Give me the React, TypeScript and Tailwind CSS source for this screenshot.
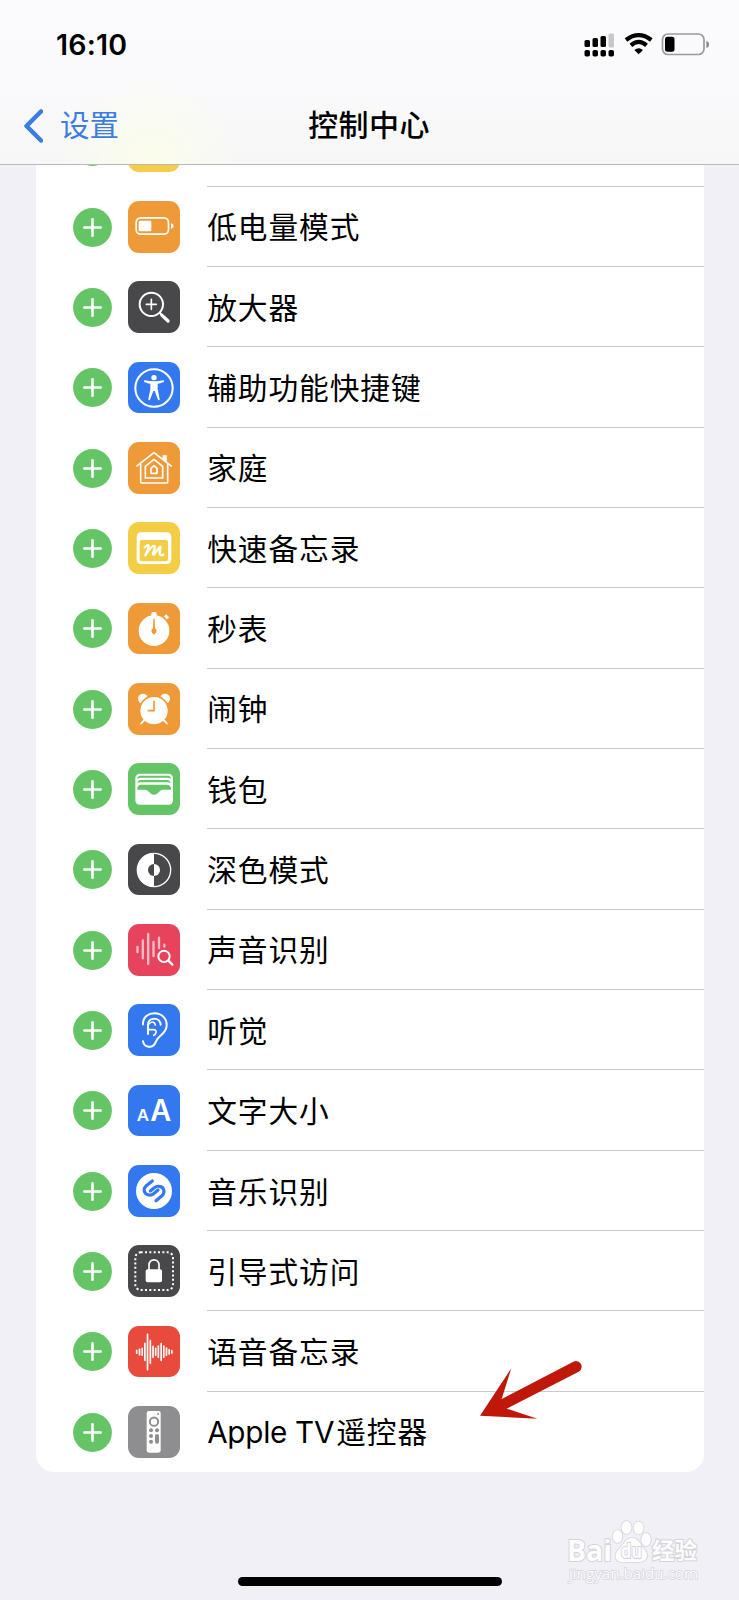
import { ReactNode } from "react";

type Control = {
    name: ReactNode,
    color: string,
    icon?: ReactNode
}

const controls: Control[] = [
    { name: "", color: "bg-[#f5cd46]" },
    {
        name: "低电量模式", color: "bg-[#ef9a38]", icon: <>
            <rect x="24.5" y="50.5" width="97" height="49" rx="14" fill="none" stroke="white" strokeWidth="5" />
            <rect x="32" y="59" width="38" height="32" rx="4" />
            <path d="M129 67q8 2 8 8t-8 8z" />
        </>
    },
    {
        name: "放大器", color: "bg-[#48484a]", icon: <g fill="none" stroke="white" strokeWidth="6" strokeLinecap="round">
            <circle cx="70" cy="70" r="35" />
            <path d="M55 70H85M70 55V85" strokeWidth="5" />
            <path d="M95 95L104 104" />
            <path d="M102 103L120 120" strokeWidth="10" />
        </g>
    },
    {
        name: "辅助功能快捷键", color: "bg-[#3478f0]", icon: <>
            <circle cx="78" cy="78" r="56" fill="none" stroke="white" strokeWidth="6" />
            <circle cx="78" cy="47" r="8" />
            <path d="M51 55Q78 61 105 55Q109 55 108 59Q107 61 89 65V82L95 111Q94 117 90 113L80 87H76L66 113Q62 117 61 111L67 82V65Q49 61 48 59Q47 55 51 55Z" />
        </>
    },
    {
        name: "家庭", color: "bg-[#ef9a38]", icon: <g fill="none" stroke="white" strokeWidth="5" strokeLinejoin="round">
            <path d="M104 52V40H116V62" fill="white" strokeWidth="1" />
            <path d="M25 73L78 32L131 73" />
            <path d="M38 66V119Q38 123 42 123H115Q119 123 119 119V66" />
            <path d="M52 73L78 52L104 73V108H52Z" />
            <path d="M69 79L78 71L87 79V94H69Z" />
        </g>
    },
    {
        name: "快速备忘录", color: "bg-[#f3cd46]", icon: <>
            <path fillRule="evenodd" d="M39 31H116Q130 31 130 45V112Q130 126 116 126H39Q26 126 26 112V45Q26 31 39 31ZM41 54Q35 54 35 60V111Q35 118 42 118H113Q120 118 120 111V60Q120 54 114 54Z" />
            <path d="M50 76Q61 66 62 72Q62 78 52 100Q72 69 79 72Q83 75 75 93Q73 101 79 96L94 76Q100 71 97 81Q90 105 106 98" fill="none" stroke="white" strokeWidth="7" strokeLinecap="round" strokeLinejoin="round" />
        </>
    },
    {
        name: "秒表", color: "bg-[#ef9a38]", icon: <>
            <circle cx="78" cy="83" r="46" />
            <rect x="70" y="27" width="16" height="14" rx="5" />
            <path d="M111 37L120 46" stroke="white" strokeWidth="9" />
            <path d="M76 48Q78 44 80 48L81 76Q86 79 86 84Q86 89 80 93L78 96L76 93Q70 89 70 84Q70 79 75 76Z" fill="#ef9a38" />
        </>
    },
    {
        name: "闹钟", color: "bg-[#ef9a38]", icon: <>
            <circle cx="45" cy="47" r="15" />
            <circle cx="111" cy="47" r="15" />
            <circle cx="78" cy="83" r="46" fill="#ef9a38" />
            <path d="M50 110L39 122M106 110L117 122" stroke="white" strokeWidth="5" strokeLinecap="round" />
            <circle cx="78" cy="83" r="41" />
            <path d="M78 53V83H59" fill="none" stroke="#ef9a38" strokeWidth="5" />
        </>
    },
    {
        name: "钱包", color: "bg-[#64c466]", icon: <>
            <rect x="22" y="32" width="113" height="93" rx="13" />
            <path d="M28 47Q28 38 38 38H118Q129 38 129 47Q125 44 118 44H39Q32 44 28 47ZM28 60Q31 51 39 51H118Q125 51 129 60V61Q125 58 118 58H39Q32 58 28 61ZM28 74Q31 65 39 65H118Q125 65 129 74V80H106Q100 80 96 84L86 93Q78 98 70 93L60 84Q56 80 50 80H28Z" fill="#64c466" />
        </>
    },
    {
        name: "深色模式", color: "bg-[#48484a]", icon: <>
            <circle cx="78" cy="78" r="50" fill="none" stroke="white" strokeWidth="4" />
            <path d="M78 27A51 51 0 0 0 78 129Z" />
            <path d="M78 60A18 18 0 0 0 78 96Z" fill="#48484a" />
            <path d="M78 60A18 18 0 0 1 78 96Z" />
        </>
    },
    {
        name: "声音识别", color: "bg-[#e7435d]", icon: <g fill="none" stroke="white" strokeLinecap="round">
            <path d="M28.500 69V84M44.500 49V103M60.500 30V120M76.500 54V96M93 41V72M109 62V68" strokeWidth="7" opacity=".65" />
            <circle cx="108" cy="97" r="17" strokeWidth="6" />
            <path d="M121 110L133 122" strokeWidth="7" />
        </g>
    },
    {
        name: "听觉", color: "bg-[#3478f0]", icon: <g fill="none" stroke="white" strokeWidth="6" strokeLinecap="round">
            <path d="M45 61C44 38 62 28 79 28C102 28 117 44 116 64C115 91 91 92 84 112C78 131 65 128 61 128Q48 126 45 112" />
            <path d="M60 90V62C60 39 96 37 98 62" />
            <path d="M61 61Q77 46 82 63M60 77H75C92 77 82 92 77 94" strokeWidth="5" />
        </g>
    },
    {
        name: "文字大小", color: "bg-[#3478f0]", icon: <g className="font-['Inter',sans-serif] font-semibold">
            <text x="26" y="107" fontSize="48" textLength="37" lengthAdjust="spacingAndGlyphs">A</text>
            <text x="67" y="107" fontSize="88" textLength="63" lengthAdjust="spacingAndGlyphs">A</text>
        </g>
    },
    {
        name: "音乐识别", color: "bg-[#3478f0]", icon: <>
            <circle cx="78" cy="78" r="54" />
            <g fill="none" stroke="#3478f0" strokeWidth="9.5" strokeLinecap="round">
                <path d="M73 48L55 62C43 73 49 89 63 90Q71 91 77 86L90 75" />
                <path d="M84 108L101 94C113 83 108 66 94 65Q85 64 79 69L67 79" transform="translate(0 -1)" />
            </g>
        </>
    },
    {
        name: "引导式访问", color: "bg-[#48484a]", icon: <>
            <rect x="22" y="22" width="113" height="113" rx="16" fill="none" stroke="white" strokeWidth="6" strokeDasharray="6 7" />
            <rect x="53" y="73" width="49" height="39" rx="6" />
            <path d="M63 75V61C63 39 93 39 93 61V75" fill="none" stroke="white" strokeWidth="5" />
        </>
    },
    {
        name: "语音备忘录", color: "bg-[#e84b3c]", icon: <path
            d="M26 73V82M34.500 70V86M42.500 67V88M50.500 52V103M58.500 25V131M67 44V112M75 61V94M83 67V88M91 60V94M99.500 53V103M107.500 60V94M115.500 66V88M123.500 71V84M131.500 74V81"
            stroke="white" strokeWidth="5" strokeLinecap="round"
        />
    },
    {
        name: <><span className="font-['Inter',sans-serif] tracking-[-0.3px] mr-[2px]">Apple TV</span>遥控器</>, color: "bg-[#8e8e91]", icon: <>
            <rect x="56" y="15" width="42" height="125" rx="7" />
            <circle cx="90" cy="24" r="3" fill="#8e8e91" />
            <circle cx="78" cy="47" r="12.500" fill="none" stroke="#8e8e91" strokeWidth="6" />
            <g fill="#8e8e91">
                <circle cx="69" cy="73" r="6" />
                <circle cx="87" cy="73" r="6" />
                <circle cx="69" cy="90" r="6" />
                <circle cx="69" cy="107" r="6" />
                <rect x="81" y="84" width="12" height="29" rx="6" />
            </g>
        </>
    }
];

const StatusBar = () => {
    return (
        <div className="flex items-center justify-between h-[88px] pl-[56px] pr-[30px] pt-px">
            <div className="font-['Inter',sans-serif] font-semibold text-[28.5px] tracking-[0.2px] pt-px">16:10</div>
            <svg viewBox="0 0 126 26" className="w-[126px] h-[26px]">
                <g>
                    <rect x="1.500" y="8" width="5.500" height="7" rx="1.500" />
                    <rect x="9.500" y="6" width="5.500" height="9" rx="1.500" />
                    <rect x="17.500" y="4" width="5.500" height="11" rx="1.500" />
                    <rect x="25.500" y="1.500" width="5.500" height="14" rx="1.500" fill="#c7c7c9" />
                    <rect x="1.500" y="18" width="5.500" height="6.500" rx="1.800" />
                    <rect x="9.500" y="18" width="5.500" height="6.500" rx="1.800" />
                    <rect x="17.500" y="18" width="5.500" height="6.500" rx="1.800" />
                    <rect x="25.500" y="18" width="5.500" height="6.500" rx="1.800" />
                </g>
                <path d="M43 8Q55.700 -1.700 68.300 8M47.900 13.300Q55.700 6.500 63.500 13.300" fill="none" stroke="black" strokeWidth="4.200" />
                <path d="M51.300 18Q55.700 14.500 60 18L55.700 22.300Z" />
                <rect x="79.500" y="2" width="41.500" height="20.500" rx="5.500" fill="none" stroke="#9b9b9d" strokeWidth="1.700" />
                <rect x="82" y="4.800" width="9.500" height="15" rx="2.500" />
                <path d="M123.300 9q3 1 3 3.500t-3 3.500z" fill="#8f8f91" />
            </svg>
        </div>
    )
}

const NavBar = () => {
    return (
        <div className="grid grid-cols-3 items-center h-[76px] pl-[23px] pr-6 pb-1 text-[29.5px]">
            <div className="flex items-center text-[#3b7de2]">
                <svg viewBox="0 0 20 34" className="w-5 h-[34px] mr-[17px] mt-[3px]" fill="none" stroke="currentColor" strokeWidth="4.5" strokeLinecap="round" strokeLinejoin="round">
                    <path d="M18 2.500L3.500 17L18 31.500" />
                </svg>
                <div className="-mt-[2px]">设置</div>
            </div>
            <div className="-mt-[2px] text-center font-medium text-[30px] tracking-[0.4px] whitespace-nowrap">控制中心</div>
        </div>
    )
}

const ControlRow = ({ name, color, icon }: Control) => {
    return (
        <div className="group flex items-center shrink-0 h-[80.35px] pl-[37px]">
            <svg viewBox="0 0 39 39" className="size-[39px] mr-[16.5px] mt-px">
                <circle cx="19.500" cy="19.500" r="19.400" fill="#64c466" />
                <path d="M11.300 19.500H27.700M19.500 11.300V27.700" stroke="white" strokeWidth="2.600" strokeLinecap="round" />
            </svg>
            <div className={`size-[51.7px] rounded-[11px] mr-[27px] ${color}`}>
                <svg viewBox="0 0 155 155" className="size-full" fill="white">{icon}</svg>
            </div>
            <div className="flex flex-1 items-center h-full border-b border-[#c9c9cb] group-last:border-transparent text-[29.7px] tracking-[0.95px] whitespace-nowrap">
                <div className="pl-[0.5px] pt-px">{name}</div>
            </div>
        </div>
    )
}

const Watermark = () => {
    return (
        <svg viewBox="0 0 139 68" className="absolute left-[564px] top-[1518px] w-[139px] h-[68px] font-['Open_Sans','Noto_Sans_CJK_SC',sans-serif]" fill="#fdfdfe" stroke="#d3d3da" strokeWidth="2" paintOrder="stroke">
            <text x="3" y="43" fontSize="29" fontWeight="700" textLength="45" lengthAdjust="spacingAndGlyphs">Bai</text>
            <g strokeWidth="1.600">
                <ellipse cx="53.500" cy="18.500" rx="4.800" ry="6.500" />
                <ellipse cx="62.500" cy="9.500" rx="5" ry="6.500" />
                <ellipse cx="74.500" cy="10" rx="5" ry="6.500" />
                <ellipse cx="82" cy="21.500" rx="4.800" ry="6.500" />
                <path d="M68 20C75 20 76 27 80 31C86 37 83 44 75 44H59C50 44 50 36 55 31C60 27 61 20 68 20Z" />
            </g>
            <text x="57" y="40" fontSize="20" fontWeight="700" textLength="21" lengthAdjust="spacingAndGlyphs">du</text>
            <text x="88" y="41" fontSize="23" fontWeight="700" textLength="45" lengthAdjust="spacingAndGlyphs">经验</text>
            <text x="5" y="60.500" fontSize="15" strokeWidth="1.400" textLength="129" lengthAdjust="spacingAndGlyphs">jingyan.baidu.com</text>
        </svg>
    )
}

export default function App() {
    return (
        <div className="relative flex flex-col w-[739px] h-[1600px] overflow-hidden bg-[#f0f0f6] text-black font-['Noto_Sans_CJK_SC',sans-serif]">
            <header className="h-[165px] shrink-0 border-b border-[#b9b9ba] bg-[radial-gradient(ellipse_90px_80px_at_150px_160px,#fbfdeb,transparent),linear-gradient(#fbfbfd,#fafafc_50%,#f7f7f7)]">
                <StatusBar />
                <NavBar />
            </header>
            <main className="flex flex-col justify-end h-[1307px] shrink-0 overflow-hidden pl-[35.5px] pr-[35.5px]">
                <div className="flex flex-col shrink-0 bg-white rounded-[18px]">
                    {controls.map((control, index) => (
                        <ControlRow key={index} {...control} />
                    ))}
                </div>
            </main>
            <footer className="flex flex-1 items-end justify-center pb-[14px]">
                <div className="w-[264px] h-[9px] rounded-full bg-black"></div>
            </footer>
            {/* arrow pointing at the Apple TV remote row */}
            <svg viewBox="0 0 306 174" className="absolute left-[480px] top-[1361px] w-[102px] h-[58px]" fill="#bf180b">
                <path d="M0 164L94 22L65 114L280 2Q294 -4 303 9Q309 24 296 32L80 143L172 173Z" />
            </svg>
            <Watermark />
        </div>
    )
}
